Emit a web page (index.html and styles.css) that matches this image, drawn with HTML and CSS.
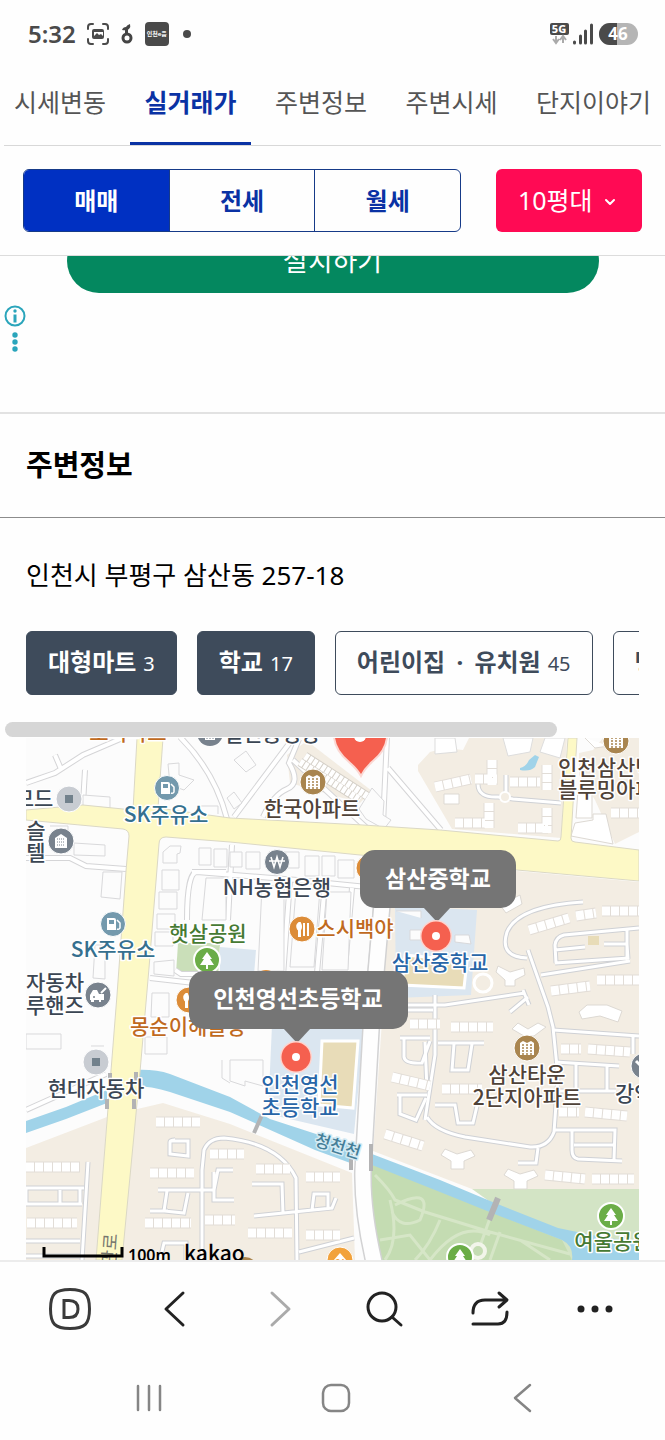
FILE: index.html
```html
<!DOCTYPE html>
<html lang="ko">
<head>
<meta charset="utf-8">
<meta name="viewport" content="width=device-width, initial-scale=1">
<title>주변정보</title>
<link rel="stylesheet" href="styles.css">
</head>
<body>
<div class="screen">
  <div class="status">
    <span class="clock">5:32</span>
    <svg class="status-icon" width="22" height="22" viewBox="0 0 22 22" fill="none" stroke="#4a4a4a" stroke-width="2" stroke-linecap="round"><path d="M1 6V4Q1 1 4 1h2M16 1h2q3 0 3 3v2M21 16v2q0 3-3 3h-2M6 21H4q-3 0-3-3v-2"/><path d="M7 6h8q2 0 2 2v6q0 2-2 2H7q-2 0-2-2V8q0-2 2-2zM7 13l3-3 2 2 2-1 2 2v-4H7z" fill="#4a4a4a" fill-rule="evenodd" stroke="none"/></svg>
    <svg class="status-icon" width="12" height="20" viewBox="0 0 12 20"><circle cx="6" cy="14" r="4" fill="none" stroke="#444" stroke-width="3"/><path d="M1 6Q2 3 5 3q1-2 4-3 1 3-1 5-2 2-7 1zM4 5h3v6H4z" fill="#444"/></svg>
    <span class="app-badge">인천e음</span>
    <span class="notice-dot"></span>
    <svg class="signal" width="89" height="24" viewBox="0 0 89 24">
      <rect x="1" y="1" width="19" height="12" rx="2" fill="#4a4a4a"/>
      <text x="10" y="11" class="five-g">5G</text>
      <path d="M7 14v6M4 17l3 4 3-4M14 21v-6M11 18l3-4 3 4" fill="none" stroke="#aaa" stroke-width="2"/>
      <path d="M25.500 20v1M31.500 14v7M36.500 9v12M42.500 3v18" stroke="#4a4a4a" stroke-width="3" stroke-linecap="round"/>
      <rect x="50" y="1" width="39" height="22" rx="11" fill="#b5b5b5"/>
      <path d="M68 1h-7a11 11 0 0 0 0 22h7z" fill="#4a4a4a"/>
      <text x="69" y="18" class="battery">46</text>
    </svg>
  </div>

  <nav class="tabs">
    <a class="tab" href="#">시세변동</a>
    <a class="tab tab-on" href="#" aria-current="page">실거래가</a>
    <a class="tab" href="#">주변정보</a>
    <a class="tab" href="#">주변시세</a>
    <a class="tab" href="#">단지이야기</a>
  </nav>

  <div class="filters">
    <div class="segments">
      <button class="segment segment-on" type="button">매매</button>
      <button class="segment" type="button">전세</button>
      <button class="segment" type="button">월세</button>
    </div>
    <div class="size-box">
      <select class="size-select" aria-label="평형"><option>10평대</option></select>
      <svg class="size-arrow" width="12" height="8" viewBox="0 0 12 8" fill="none" stroke="#fff" stroke-width="2" stroke-linecap="round" stroke-linejoin="round"><path d="M2 2l4 4 4-4"/></svg>
    </div>
  </div>

  <div class="ad">
    <button class="install" type="button">설치하기</button>
    <svg class="ad-info" width="22" height="50" viewBox="0 0 22 50"><circle cx="11" cy="12" r="9.500" fill="none" stroke="#2aa5bb" stroke-width="2"/><circle cx="11" cy="7" r="1.700" fill="#2aa5bb"/><path d="M11 10.500v8" stroke="#2aa5bb" stroke-width="3"/><g fill="#2aa5bb"><circle cx="11" cy="31" r="2.700"/><circle cx="11" cy="38" r="2.700"/><circle cx="11" cy="45" r="2.700"/></g></svg>
  </div>

  <h2 class="heading">주변정보</h2>

  <p class="address">인천시 부평구 삼산동 257-18</p>
  <div class="chips">
    <button class="chip chip-on" type="button">대형마트<span class="count">3</span></button>
    <button class="chip chip-on" type="button">학교<span class="count">17</span></button>
    <button class="chip" type="button"><span>어린이집 <span class="dot">·</span> 유치원</span><span class="count">45</span></button>
    <button class="chip" type="button">병원<span class="count">28</span></button>
  </div>
  <div class="scroll-thumb"></div>

  <div class="map">
    <svg class="map-art" viewBox="26 738 613 522" preserveAspectRatio="xMidYMid slice" role="img" aria-label="지도">
      <defs>
        <g id="streets">
          <path d="M26 783L55 773 83 755 125 737M55 755l6 14M85 770l-2 34M26 858h44l16 8 40 3M26 1110l80-36M180 737q35 35 47 82M234 817l60-80M263 817q10-22 24-28t2-26l10-24M387 737l-4 87M388 768l53 62M293 760l76 70"/>
          <path d="M150 978l44 5h180M175 970l6 4h70M192 872h34M187 920q0-48 10-48l100 8 80 8 12 2M232 845l-4 75M290 880l-7 96M325 883l-8 90M352 888l-7 80M378 880l-8 96"/>
        </g>
        <g id="lanes">
          <path d="M506 775v22M478 784q0 14 20 13l15 2 48 4"/>
          <path d="M583 902q-65 4-76 30-8 25 20 26M528 950l20 57 5 20 5 50-4 55q-6 16-24 15l-65-10q-30-6-38-20M639 928l-75 7q-8 2-9 10l1 18M555 963l74-5M555 950l30-3M604 944h23l1 15M627 930v30M541 975l89-14M398 1005l47 0 80-12M435 995v60l-10 65M510 1012l18-15M523 990l6 15"/>
          <path d="M553 1030l86 6M555 1062l64 4M576 1064v28M607 1066v25M553 1091h63M553 1130h62l-1 30M572 1130v20q0 8 6 9l44 2M574 1145h40M633 1036v18M538 1148l-2 15h-18"/>
          <path d="M400 1038h30M404 1039v18q1 7 18 6l8-22M397 1095h30M400 1096v18l16 6 10-22M425 1042l2 48M438 1043h46M454 1044l-2 26h16l4-26M435 1105h20l3 18h15l4-17"/>
          <path d="M88 1162l-6 98M26 1188h58M26 1204h56M26 1188v16M26 1241h54M26 1256h54M80 1188v16M60 1190v13"/>
          <path d="M202 1260v-90l2-20q5-12 20-12 55 5 72 40l1 82M170 1141h18v15l-18-2v-12q0-2 5-2zM158 1190h56l4-20h15M167 1191l-3 20 20 2 4-20M150 1211h18M214 1172v28h20M252 1184h30l1 30M254 1216l78-8 4-10M312 1210l2-16h14v14M299 1252l55-14M160 1260l4-17h22v17"/>
          <path d="M398 1010h35"/>
        </g>
        <g id="blocks">
          <path d="M435 787l36-8M455 823h30M510 782h30M518 828h30M475 779h22M547 765v25M492 760v25M489 803v25M547 808v25M611 813h28M529 930l40-12M576 916l20-3M602 911h37M551 991l39-5M597 980h42M451 1027h42M442 1089h40M561 1049h20M588 1049l42 3M559 1112h20M585 1112l42 4M545 1175l40 4M592 1179h42"/>
          <path d="M410 1024h30M392 1077l38 9M385 1134l38 12M26 1167h54M27 1223h50M156 1122h44M150 1173h44M145 1223h46M210 1154h34M256 1169h34M306 1177h34M248 1233h44M306 1235h34M205 1220h30"/>
        </g>
        <g id="tree"><circle r="13" fill="#6bad47" stroke="#fff" stroke-width="2"/><path d="M0-8l5 7H3l4 6H1v4h-2V5h-6l4-6h-2z" fill="#fff"/></g>
        <g id="pump"><circle r="12.500" fill="#7399ad" stroke="#fff"/><path d="M-6-6h7q2 0 2 2v10h-9zM-4-4v4h5v-4z" fill="#fff" fill-rule="evenodd"/><path d="M4-4l3 3v5q-1 2-3 1" fill="none" stroke="#fff" stroke-width="1.500"/></g>
        <g id="apt"><circle r="13" fill="#a9854f" stroke="#fff"/><path d="M-7 7V-5l3-2 4 2 4-2 3 2V7z" fill="#fff"/><path d="M-5-3H5M-5 0H5M-5 3H5M-5 6H5" stroke="#a9854f" stroke-width="1.500" stroke-dasharray="2 2"/></g>
        <g id="food"><circle r="13" fill="#dc8c38" stroke="#fff"/><path d="M-3-6q-3 2-1 6l1 1v6h1V1q2-3 0-7zM2-6V7M6-6V7" fill="#fff" stroke="#fff" stroke-width="2"/></g>
        <g id="shop"><circle r="13" fill="#c8ccd2" stroke="#fff"/><path d="M-4-4h8v8h-8z" fill="#72818c"/></g>
        <g id="spot"><circle r="16" fill="#ffd3cd"/><circle r="14.500" fill="#f5604f"/><circle r="4" fill="#fff"/></g>
      </defs>

      <rect x="26" y="738" width="613" height="522" fill="#fcfcfc"/>

      <g fill="#f3ede3">
        <path d="M418 765l12-13 15-4 18 2 6-12h98l-6 100-109-9-34-58z"/>
        <path d="M579 753l14-3 10-12h36v94l-24 12-20-44-16-25z"/>
        <path d="M390 863l127 8 122 11v307H472l-99-38 9-130z"/>
        <path d="M26 1148l81-31-10 143H26zM133 1110l30-7 67 21 122 49 3 87H122z"/>
        <path d="M287 755l20-14 65 50-12 12-70-20z"/>
      </g>
      <path d="M435 738h20l2 14-22 2zM503 738h30l-3 14-22 4zM540 752l5-14h20l-5 20z" fill="#fff" stroke="#ddd"/>
      <path d="M395 906l82 4-6 85-75 3zM272 1025l92 4-10 105-86-20z" fill="#dbe6f0"/>
      <path d="M178 943h42l-2 34-42-3z" fill="#cadfb9"/>
      <path d="M220 947l36 3-2 25-34 1z" fill="#dbe6f0"/>
      <path d="M322 1041h36l-5 67-34-3z" fill="#e8dcb8" stroke="#fff" stroke-width="3"/>
      <path d="M405 955l62 6-3 27-62-3z" fill="#e8dcb8" stroke="#fff" stroke-width="3"/>
      <circle cx="483" cy="983" r="9" fill="none" stroke="#fff" stroke-width="3"/>
      <path d="M588 936h11v9h-11z" fill="#e8dcb8"/>

      <path d="M472 1189h167v71h-67z" fill="#d3e4c5"/>
      <path d="M368 1162l72 28 62 26 60 24 10 20H380l-7-43z" fill="#c4dcb2"/>
      <g fill="none" stroke="#d6e6c7" stroke-width="3">
        <path d="M375 1175q15 15 20 25l30 12 65 20 80 22M385 1260q15-20 5-60M395 1205q40-20 25 15-20 10-28-8M440 1220q-10 25-25 40M490 1218l-15 42M500 1232l-10 28M520 1240l30 20M430 1260q30-40 60-25M380 1240l30-5 20 25"/>
      </g>
      <circle cx="478" cy="1251" r="7" fill="#c4dcb2" stroke="#f2f5ea" stroke-width="4"/>

      <g fill="#a0d3e9">
        <path d="M26 1121l40-14 41-17v13l-41 16-40 14z"/>
        <path d="M135 1070q20-1 35 4l60 23 40 22 83 27v18l-38-14-85-38-60-20q-18-6-37-6z"/>
        <path d="M372 1154l68 26 55 23 63 25 34 7 47 8v17h-67q2-14-10-20l-60-23-62-25-68-27z"/>
        <path d="M520 768q6-1 9-8l6-5 4 2-4 10q-5 5-15 3z"/>
      </g>

      <use href="#streets" fill="none" stroke="#d5d5d7" stroke-width="6"/>
      <use href="#streets" fill="none" stroke="#fff" stroke-width="4"/>
      <use href="#lanes" fill="none" stroke="#cfd1d5" stroke-width="5"/>
      <use href="#lanes" fill="none" stroke="#fff" stroke-width="3"/>
      <use href="#blocks" fill="none" stroke="#e2ddd7" stroke-width="11"/>
      <use href="#blocks" fill="none" stroke="#fff" stroke-width="9" stroke-dasharray="8 1"/>
      <circle cx="505" cy="797" r="5" fill="#f3ede3" stroke="#fff" stroke-width="2"/>

      <g fill="#fff" stroke="#ddd9d3">
        <path d="M444 794h15v10h-15zM578 790h14v28h-16zM575 823l18-3v-6h13l7 30-42-8zM579 1012l8-7 20 0 15 6-4 11-18-6-18 3z"/>
        <path d="M518 1023l10 6 10-6 8 4-12 9h-10l-12-7zM445 1149l12 5 14-4 4 6-11 5v8h-13v-8l-10-6zM508 1169l12 5 14-4 4 6-11 5v8h-13v-8l-10-6zM498 966l12 6 14-4 1 7-10 5v6h-10v-6l-9-8zM500 905l20-10 2 9-16 9z"/>
        <path d="M585 738l10 10 14-2"/>
      </g>

      <g fill="#fcfcfc" stroke="#d9d9db">
        <path d="M83 795l27 2v11l-27-2zM74 843l31 2v11l-31-1zM103 872h19l-2 27-19-2zM50 826h18v5M168 764l11-1v12l15 5-10 10-14-5zM196 806h22v8M163 852l7-6h11l-1 7-3 1v9h-14zM199 848h12v17h-12zM214 849h13v18h-13zM162 870h17v20h-17zM159 892h18v17h-18zM157 914h18v15h-18zM155 932h18v14h-18zM95 945h10v34l-12-1zM154 962l20-2v16l-20-2z"/>
        <path d="M230 852h12v15h-12zM246 852h14v17h-14zM285 852h14v16h-14zM305 856h14v20h-14zM322 856h13v20h-13zM338 860h16v18h-16zM206 878h20v42h-24zM262 886h22v85h-26zM296 889h24l-6 78h-24zM327 892h24l-3 78h-26zM234 760l12-9 10 14-10 7zM227 798l7-6 8 11-8 6zM152 993h17v24h-18zM145 1037h22v17h-22zM26 1034h35v15H26zM91 1046h13M230 1060h33v26l-18-5v5l-15-5zM222 1060v18l8 5M372 788l12 13-1 14 8 5-7 9-18-10-7-10z"/>
        <path d="M305 756l62 40M300 762l60 38" stroke="#d5d0c8" stroke-width="9"/><path d="M305 756l62 40M300 762l60 38" stroke="#fff" stroke-width="7" stroke-dasharray="4 1"/>
        <path d="M410 930h14v10h-14zM396 911h25v7M455 935h14l2 9-16-2z"/>
      </g>

      <path d="M385 870L371 1030 363 1170Q362 1210 374 1262" fill="none" stroke="#d2d2d3" stroke-width="18"/>
      <path d="M385 870L371 1030 363 1170Q362 1210 374 1262" fill="none" stroke="#fefefe" stroke-width="15"/>

      <path d="M137 738h26l-5 70 72 10 133 7 77 5 118 11q3 0 3-4l7-99h9l-6 100q0 4 4 4l64 8v31l-122-11-157-15-130-13-64-5q-7 0-7 7l-10 124-9 104-18 188H96l21-265 9-124 3-35q0-6-6-7l-97-9v-10l57-5 50 5z" fill="#fdf9c6" stroke="#dbd8c5" stroke-width="1"/>

      <g stroke="#b3b3b4" stroke-width="4"><path d="M110 1073v12M107 1099v10M136 1072v10M134 1099v10M262 1115l-8 18M351 1154v16M371 1144v27"/><path d="M498 1198l-9 22" stroke-width="6"/></g>

      <use href="#shop" x="69" y="799"/>
      <use href="#pump" x="167" y="788"/>
      <use href="#pump" x="113" y="924"/>
      <use href="#shop" x="96" y="1062"/>
      <g transform="translate(61 841)"><circle r="13" fill="#78828d" stroke="#fff"/><path d="M-6 7V-3l6-4 6 4V7z" fill="#fff"/><path d="M-4-2h8M-4 1h8M-4 4h8" stroke="#78828d" stroke-dasharray="1 1"/></g>
      <g transform="translate(98 995)"><circle r="13" fill="#78828d" stroke="#fff"/><path d="M-8 5v-5l3-5h4l2 4h5v6H3v2H1V5h-5v2h-3V5z" fill="#fff"/><path d="M3-2l5-5" stroke="#fff" stroke-width="2"/><circle cx="-4" cy="2" r="1" fill="#78828d"/></g>
      <g transform="translate(210 733)"><circle r="13" fill="#78828d"/><path d="M-5-5H5V7H-5z" fill="#fff"/><path d="M-3 0v6M0 0v6M3 0v6" stroke="#78828d"/></g>
      <g transform="translate(277 862)"><circle r="12.500" fill="#78828d" stroke="#fff"/><path d="M-6-5l3 10 3-10 3 10 3-10M-8-1H8" fill="none" stroke="#fff" stroke-width="1.600"/></g>
      <use href="#apt" x="313" y="782"/>
      <use href="#apt" x="616" y="741"/>
      <use href="#apt" x="527" y="1048"/>
      <use href="#food" x="302" y="929"/>
      <use href="#food" x="369" y="868"/>
      <use href="#food" x="189" y="1000"/>
      <circle cx="266" cy="981" r="11" fill="#dc8c38"/>
      <use href="#tree" x="207" y="960"/>
      <use href="#tree" x="611" y="1216"/>
      <use href="#tree" x="460" y="1257"/>
      <g transform="translate(340 1260)"><circle r="13" fill="#f2a23b" stroke="#fff"/><path d="M-7 1l7-8 7 8v9H-7z" fill="#fff"/><text class="store-num" x="0" y="5">24</text></g>
      <circle cx="245" cy="1270" r="13" fill="#a9854f"/>
      <g transform="translate(644 1066)"><circle r="13" fill="#78828d" stroke="#fff"/><path d="M-8-5l7 7" stroke="#fff" stroke-width="3"/></g>

      <path d="M334 730q-2 18 15 32 9 8 12 14 4-8 12-15 16-13 14-31z" fill="#f5604f" stroke="#fbd9d4" stroke-width="2"/>
      <circle cx="360" cy="736" r="6" fill="#fff"/>

      <g class="labels">
        <text x="128" y="740" class="orange">모아마트</text>
        <text x="272" y="741">열린공영장</text>
        <text x="34" y="806">모드</text>
        <text x="36" y="838">슬</text><text x="36" y="860">텔</text>
        <text x="166" y="822" class="teal">SK주유소</text>
        <text x="113" y="957" class="teal">SK주유소</text>
        <text x="312" y="816" class="brown">한국아파트</text>
        <text x="616" y="775" class="brown">인천삼산벽산</text>
        <text x="616" y="797" class="brown">블루밍아파트</text>
        <text x="277" y="895">NH농협은행</text>
        <text x="355" y="936" class="orange">스시백야</text>
        <text x="208" y="941" class="green">햇살공원</text>
        <text x="440" y="970" class="blue">삼산중학교</text>
        <text x="55" y="990">자동차</text><text x="55" y="1013">루핸즈</text>
        <text x="188" y="1034" class="orange">몽순이해물탕</text>
        <text x="96" y="1096">현대자동차</text>
        <text x="300" y="1092" class="blue">인천영선</text><text x="300" y="1115" class="blue">초등학교</text>
        <text x="527" y="1082" class="brown">삼산타운</text><text x="527" y="1105" class="brown">2단지아파트</text>
        <text x="644" y="1101">강약국</text>
        <text x="613" y="1249" class="green">여울공원</text>
        <text x="0" y="0" class="river" transform="translate(336 1152) rotate(17)">청천천</text>
        <text x="0" y="0" class="road" transform="translate(115 1267) rotate(-86)">체육관로</text>
      </g>

      <g fill="#757575">
        <rect x="360" y="850" width="156" height="58" rx="15"/><path d="M423 907h28l-14 15z"/>
        <rect x="189" y="971" width="219" height="58" rx="15"/><path d="M283 1028h28l-14 15z"/>
      </g>
      <use href="#spot" x="436" y="936"/>
      <use href="#spot" x="296" y="1057"/>
      <text class="tip" x="438" y="887">삼산중학교</text>
      <text class="tip" x="298" y="1007">인천영선초등학교</text>

      <path d="M44 1247v9h78v-9" fill="none" stroke="#000" stroke-width="3"/>
      <text class="scale" x="128" y="1261">100m</text>
      <text class="brand" x="184" y="1261">kakao</text>
    </svg>
  </div>

  <div class="toolbar">
    <button class="tool" type="button" aria-label="홈"><svg width="44" height="44" viewBox="0 0 44 44" fill="none" stroke="#3a3a3a" stroke-width="3"><path d="M22 2.500c15 0 19.500 4.500 19.500 19.500S37 41.500 22 41.500 2.500 37 2.500 22 7 2.500 22 2.500z"/><path d="M16 13.500h5q9 0 9 8.500t-9 8.500h-5z"/></svg></button>
    <button class="tool" type="button" aria-label="뒤로"><svg width="44" height="44" viewBox="0 0 44 44" fill="none" stroke="#222" stroke-width="3" stroke-linecap="round" stroke-linejoin="round"><path d="M30 6L13 22l17 16"/></svg></button>
    <button class="tool" type="button" aria-label="앞으로"><svg width="44" height="44" viewBox="0 0 44 44" fill="none" stroke="#aaa" stroke-width="3" stroke-linecap="round" stroke-linejoin="round"><path d="M14 6l17 16-17 16"/></svg></button>
    <button class="tool" type="button" aria-label="검색"><svg width="44" height="44" viewBox="0 0 44 44" fill="none" stroke="#222" stroke-width="3" stroke-linecap="round"><circle cx="19" cy="20" r="14"/><path d="M29 30l9 8"/></svg></button>
    <button class="tool" type="button" aria-label="새로고침"><svg width="44" height="44" viewBox="0 0 44 44" fill="none" stroke="#222" stroke-width="3" stroke-linecap="round" stroke-linejoin="round"><path d="M5 26q0-13 12-13h21M31 6l8 7-8 7M39 25q0 12-9 12H5"/></svg></button>
    <button class="tool" type="button" aria-label="더보기"><svg width="44" height="44" viewBox="0 0 44 44" fill="#222"><circle cx="8" cy="22" r="3.500"/><circle cx="22" cy="22" r="3.500"/><circle cx="36" cy="22" r="3.500"/></svg></button>
  </div>
  <div class="system-nav">
    <button class="tool" type="button" aria-label="최근 앱"><svg width="30" height="30" viewBox="0 0 30 30" stroke="#858585" stroke-width="2.500" stroke-linecap="round"><path d="M4 3v24M15 3v24M26 3v24"/></svg></button>
    <button class="tool" type="button" aria-label="홈 화면"><svg width="30" height="30" viewBox="0 0 30 30" fill="none" stroke="#858585" stroke-width="2.500"><rect x="2" y="2" width="26" height="26" rx="8"/></svg></button>
    <button class="tool" type="button" aria-label="이전"><svg width="30" height="30" viewBox="0 0 30 30" fill="none" stroke="#858585" stroke-width="2.500" stroke-linecap="round" stroke-linejoin="round"><path d="M22 2L7 15l15 13"/></svg></button>
  </div>
</div>
</body>
</html>
```

FILE: styles.css
```css
* { box-sizing: border-box; }
body { margin: 0; background: #fefefe; color: #111; font-family: "Noto Sans", "Noto Sans CJK KR", sans-serif; }
button, select { font: inherit; padding: 0; margin: 0; border: 0; background: none; color: inherit; }
svg { display: block; }
.screen { display: flex; flex-direction: column; min-height: 100vh; overflow: hidden; }

.status { display: flex; align-items: center; height: 68px; padding: 0 27px 0 28px; }
.clock { font-size: 24px; font-weight: 600; line-height: 32px; color: #4a4a4a; margin-right: 11px; }
.status-icon { margin-right: 12px; flex: none; }
.app-badge { width: 24px; height: 24px; border-radius: 4px; background: #4a4a4a; color: #fff; font-size: 6px; font-weight: 700; line-height: 24px; text-align: center; white-space: nowrap; }
.notice-dot { width: 8px; height: 8px; border-radius: 50%; background: #4a4a4a; margin-left: 14px; }
.signal { margin-left: auto; }
.five-g { font-size: 11px; font-weight: 800; fill: #fff; text-anchor: middle; }
.battery { font-size: 17px; font-weight: 700; fill: #fff; text-anchor: middle; }

.tabs { display: flex; justify-content: space-between; height: 78px; margin: 0 4px; border-bottom: 1px solid #d8d8d8; }
.tab { flex: none; height: 77px; padding: 14px 14px 0; margin: 0 -4px; border-bottom: 3px solid transparent; color: #555; font-size: 25px; line-height: 40px; text-decoration: none; white-space: nowrap; }
.tab-on { color: #0a32a4; border-color: #0a32a4; font-weight: 700; }

.filters { display: flex; gap: 35px; height: 110px; padding: 23px; border-bottom: 1px solid #dcdcdc; }
.segments { flex: 1; display: flex; height: 63px; border: 1px solid #163a88; border-radius: 6px; overflow: hidden; }
.segment { flex: 1; color: #0a32a4; font-size: 24px; font-weight: 700; line-height: 60px; cursor: pointer; }
.segment + .segment { border-left: 1px solid #163a88; }
.segment-on { background: #0030c2; color: #fff; }
.size-box { position: relative; width: 146px; height: 63px; }
.size-select { appearance: none; width: 100%; height: 100%; padding: 0 0 2px 22px; border-radius: 6px; background: #ff0a54; color: #fff; font-size: 25px; }
.size-arrow { position: absolute; right: 26px; top: 29px; pointer-events: none; }

.ad { position: relative; height: 158px; overflow: hidden; border-bottom: 2px solid #e2e2e2; }
.install { display: block; width: 80%; height: 64px; margin: -27px auto 0; border-radius: 32px; background: #04885f; color: #fff; font-size: 27px; line-height: 60px; }
.ad-info { position: absolute; left: 4px; top: 48px; }

.heading { margin: 0; height: 104px; padding-left: 26px; border-bottom: 1px solid #8c8c8c; color: #000; font-size: 29px; font-weight: 700; line-height: 102px; }
.address { margin: 37px 26px 36px; color: #000; font-size: 26px; line-height: 40px; }
.chips { display: flex; gap: 20px; margin: 0 26px; overflow: hidden; }
.chip { flex: none; display: flex; align-items: baseline; gap: 7px; height: 64px; padding: 0 21px; border: 1px solid #3e4b5b; border-radius: 6px; color: #3e4b5b; font-size: 24px; font-weight: 700; line-height: 59px; white-space: nowrap; }
.chip-on { background: #3e4b5b; color: #fff; }
.dot { margin: 0 5px; }
.count { font-size: 20px; font-weight: 400; }
.scroll-thumb { width: 83%; height: 15px; margin: 27px 0 0 5px; border-radius: 8px; background: #d6d6d6; }

.map { margin: 1px 26px 0; }
.map-art { width: 100%; height: 522px; }
.labels { font-family: "Noto Sans CJK KR", sans-serif; font-size: 21px; font-weight: 500; fill: #3b4653; text-anchor: middle; paint-order: stroke; stroke: #fff; stroke-width: 3px; stroke-linejoin: round; }
.orange { fill: #c06a1e; }
.teal { fill: #35708f; }
.brown { fill: #4f4238; }
.green { fill: #467a33; }
.blue { fill: #2866a8; }
.river { font-size: 17px; fill: #457e98; stroke: #d4ebf4; }
.road { font-size: 18px; font-weight: 400; fill: #77776f; stroke: #fdf9c6; }
.store-num { font-size: 8px; font-weight: 700; fill: #f2a23b; text-anchor: middle; }
.tip { font-family: "Noto Sans CJK KR", sans-serif; font-size: 23px; font-weight: 700; fill: #fff; text-anchor: middle; }
.scale { font-size: 16px; font-weight: 600; }
.brand { font-family: "Noto Sans CJK KR", sans-serif; font-size: 21px; font-weight: 500; }

.toolbar { display: grid; grid-template-columns: repeat(6, 1fr); height: 96px; padding: 0 17px; border-top: 2px solid #ececec; }
.tool { display: flex; align-items: center; justify-content: center; cursor: pointer; }
.system-nav { display: grid; grid-template-columns: repeat(3, 1fr); height: 84px; padding: 0 49px 0 56px; }
```
